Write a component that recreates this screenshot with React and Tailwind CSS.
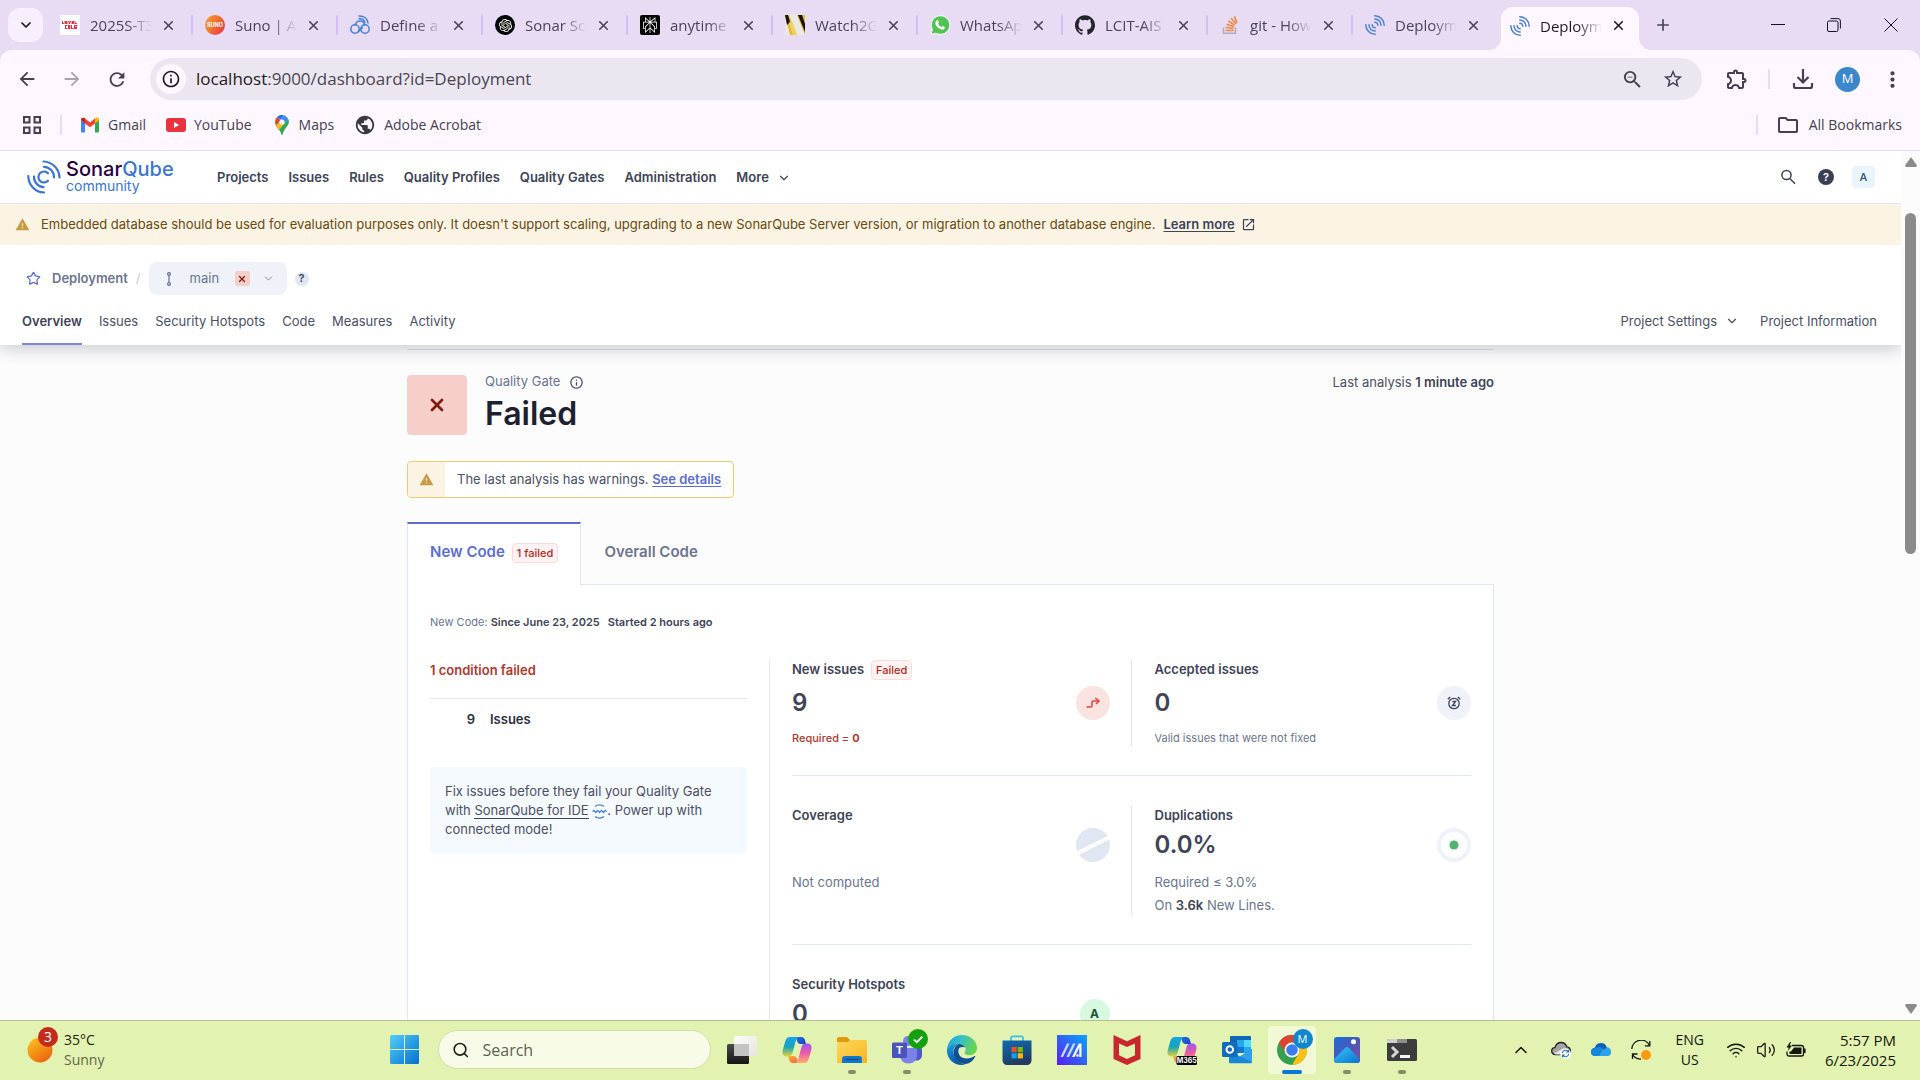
import React from "react";
import {
  MdArrowBack, MdArrowForward, MdRefresh, MdInfoOutline, MdStarBorder, MdOutlineExtension,
  MdMoreVert, MdPublic, MdOutlineFolder, MdWarning, MdOutlineZoomOut, MdOpenInNew,
} from "react-icons/md";
import { SiOpenai, SiPerplexity, SiGithub } from "react-icons/si";
import { ChevronDown, ChevronUp, X, Plus, Search, Wifi, Volume2, Star } from "lucide-react";

const SEGOE = "font-['Open_Sans','Noto_Sans',sans-serif]";
const INTER = "font-['Inter',sans-serif]";

/* ---------- favicons ---------- */

function SonarFavicon() {
  return (
    <svg viewBox="0 0 20 20" className="size-5" fill="none" stroke="#4a7ed6" strokeWidth="1.5" strokeLinecap="round">
      <path d="M9.8 .8A9.4 9.4 0 0 1 19.2 10.2M9.8 4A6.2 6.2 0 0 1 16 10.2M9.8 7.2A3 3 0 0 1 12.8 10.2" />
      <path d="M.8 9.8A9.4 9.4 0 0 0 10.2 19.2M4 9.8A6.2 6.2 0 0 0 10.2 16M7.2 9.8A3 3 0 0 0 10.2 12.8" />
    </svg>
  );
}

function LoyalistFavicon() {
  return (
    <span className="flex size-5 flex-col justify-center gap-px bg-white px-0.5">
      <svg viewBox="0 0 16 10" className="w-4" fill="#e0364c">
        <path d="M0 1h1v2h1v1H0zM2.500 1h3v3h-3zM6 1h1l.5 1L8 1h1L8 4H7zM9.500 1h2.500v3H9.500zM12.500 1h1v2h1.500v1h-2.500z" />
        <path d="M3 5h2.500v1H4v2h1.500v1H3zM6 5h2.500v4H6zM9 5h1v3h1.500v1H9zM12 5h3.500v1H13v.5h2V9h-3z" />
      </svg>
    </span>
  );
}

function SunoFavicon() {
  return (
    <svg viewBox="0 0 20 20" className="size-5">
      <defs>
        <linearGradient id="suno" x1="0" y1="0" x2="1" y2="0.6">
          <stop offset="0" stopColor="#f6a53c" />
          <stop offset="0.55" stopColor="#f0722c" />
          <stop offset="1" stopColor="#ea3f4b" />
        </linearGradient>
      </defs>
      <circle cx="10" cy="10" r="10" fill="url(#suno)" />
      <text x="10" y="12" textAnchor="middle" fontSize="5.5" fontWeight="700" fill="#fff" fontFamily="Inter">SUNO</text>
    </svg>
  );
}

function CloudFavicon() {
  return (
    <svg viewBox="0 0 20 20" className="size-5" fill="none" stroke="#4a80d8" strokeWidth="1.5" strokeLinecap="round">
      <circle cx="5" cy="14" r="4.2" />
      <circle cx="15" cy="14" r="4.2" />
      <path d="M5.5 9.8A4.6 4.6 0 0 1 14.6 9.8M8 17L12.5 12.5" />
      <path d="M9 .9C14 .8 17.5 3.6 18 8M9 3.8C12 3.8 14.3 5 15 7.6" />
    </svg>
  );
}

function OpenAIFavicon() {
  return (
    <span className="flex size-5 items-center justify-center rounded-full bg-black text-white">
      <SiOpenai size={13} />
    </span>
  );
}

function PerplexityFavicon() {
  return (
    <span className="flex size-5 items-center justify-center rounded-xs bg-black text-white">
      <SiPerplexity size={16} />
    </span>
  );
}

function WatchFavicon() {
  return (
    <svg viewBox="0 0 20 20" className="size-5">
      <rect width="20" height="20" fill="#ebe9e4" />
      <path d="M0 0h4l8 20H5z" fill="#e9b731" />
      <path d="M0 0h3l2 7-3 3z" fill="#141414" />
      <path d="M4 8l3-2 5 14H8z" fill="#f3cf5c" />
      <path d="M12 0h8v20z" fill="#e9b731" />
      <path d="M13 0h4l3 9v8z" fill="#141414" />
    </svg>
  );
}

function WhatsAppFavicon() {
  return (
    <svg viewBox="0 0 20 20" className="size-5">
      <path d="M1 19.500l1.300-5A9.300 9.300 0 1 1 6 18.200z" fill="#4fc455" stroke="#fff" />
      <path d="M6.800 5.200c.4-.4 1.100-.3 1.300.1l.8 1.900c.1.500-.8 1.200-.8 1.500.7 1.500 1.800 2.500 3.300 3.200.4 0 1-1.100 1.400-1l2 1c.3.300.1 1.300-.3 1.800-.8.900-2.200 1.100-3.600.6-2.500-.9-4.300-2.600-5.300-4.900-.5-1.700 0-3.300 1.200-4.200z" fill="#fff" />
    </svg>
  );
}

function StackFavicon() {
  return (
    <svg viewBox="0 0 20 20" className="size-5" fill="none" strokeWidth="1.6">
      <path d="M3.5 12.5V18.2H15.5V12.5" stroke="#b3aeb8" />
      <path d="M5.5 15.5h8M5.7 12.5l7.8 1M6.6 9.2l7.2 2.6M8.4 6l6.3 4.4M11 3.2l5 5.8M14.4 1.4l2.6 6.6" stroke="#ee8646" />
    </svg>
  );
}

const tabs = [
  { title: "2025S-T3", Icon: LoyalistFavicon },
  { title: "Suno | AI", Icon: SunoFavicon },
  { title: "Define a", Icon: CloudFavicon },
  { title: "Sonar Sc", Icon: OpenAIFavicon },
  { title: "anytime", Icon: PerplexityFavicon },
  { title: "Watch2G", Icon: WatchFavicon },
  { title: "WhatsApp", Icon: WhatsAppFavicon },
  { title: "LCIT-AIS", Icon: () => <SiGithub size={20} color="#24242c" /> },
  { title: "git - How", Icon: StackFavicon },
  { title: "Deploym", Icon: SonarFavicon, last: true },
];

function TabBody({ title, Icon }) {
  return (
    <>
      <span className="shrink-0"><Icon /></span>
      <span className="ml-2.5 w-[62px] overflow-hidden text-[15px] leading-6 whitespace-nowrap [mask-image:linear-gradient(to_right,black_60%,transparent)]">{title}</span>
      <button aria-label={`Close ${title}`} className="ml-1.5 flex size-5 items-center justify-center"><X size={15} strokeWidth={2.6} /></button>
    </>
  );
}

function TabStrip() {
  return (
    <div className="flex h-[50px] items-center bg-[#e8dcf4] pl-2 text-[#4a4358]">
      <button aria-label="Search tabs" className="flex h-[34px] w-[35px] items-center justify-center rounded-xl bg-[#f7effd] text-[#1c1a22]">
        <ChevronDown size={16} strokeWidth={2.6} />
      </button>
      <div className="ml-[5px] flex">
        {tabs.map((t, i) => (
          <div key={i} className="flex h-5 w-[145px] items-center pl-3">
            <TabBody {...t} />
            {!t.last && <span className="ml-auto h-5 w-0.5 rounded bg-[#d3bdf8]" />}
          </div>
        ))}
      </div>
      <div className="relative ml-[3px] flex h-[43px] w-[138px] items-center self-end rounded-t-xl bg-[#fef7ff] pb-1.5 pl-[9px] text-[#1f1b26]">
        <span className="absolute bottom-0 -left-3 h-3 w-3 bg-[radial-gradient(circle_at_0_0,#e8dcf4_12px,#fef7ff_12px)]" />
        <span className="absolute -right-3 bottom-0 h-3 w-3 bg-[radial-gradient(circle_at_100%_0,#e8dcf4_12px,#fef7ff_12px)]" />
        <TabBody title="Deploym" Icon={SonarFavicon} />
      </div>
      <button aria-label="New tab" className="ml-3.5 flex size-5 items-center justify-center"><Plus size={18} strokeWidth={2.2} /></button>
      <div className="ml-auto flex text-[#15131a]">
        <button aria-label="Minimize" className="flex h-10 w-14 items-center justify-center">
          <svg viewBox="0 0 14 14" className="size-3.5" stroke="currentColor"><path d="M0 6.5h14" /></svg>
        </button>
        <button aria-label="Restore" className="flex h-10 w-14 items-center justify-center">
          <svg viewBox="0 0 14 14" className="size-3.5" stroke="currentColor" fill="none">
            <rect x=".5" y="3" width="10.5" height="10.5" rx="1.5" /><path d="M3.5.6H11a2.4 2.4 0 0 1 2.4 2.4v7.5" />
          </svg>
        </button>
        <button aria-label="Close" className="flex h-10 w-[58px] items-center justify-center">
          <svg viewBox="0 0 14 14" className="size-3.5" stroke="currentColor"><path d="M.5.5l13 13M13.5.5l-13 13" /></svg>
        </button>
      </div>
    </div>
  );
}

function Toolbar() {
  return (
    <div className="bg-[#e8dcf4]">
      <div className="flex h-[58px] items-center rounded-t-xl bg-[#fef7ff] text-[#463f52]">
        <button aria-label="Back" className="ml-4 flex size-[22px] items-center justify-center"><MdArrowBack size={22} /></button>
        <button aria-label="Forward" className="ml-[23px] flex size-[22px] items-center justify-center text-[#a9a2b0]"><MdArrowForward size={22} /></button>
        <button aria-label="Reload" className="ml-[23px] flex size-[22px] items-center justify-center"><MdRefresh size={23} /></button>
        <div className="ml-[22px] flex h-[42px] flex-1 items-center rounded-full bg-[#ece6f0] px-1.5">
          <button aria-label="Site information" className="flex size-[30px] items-center justify-center rounded-full bg-[#fef7ff] text-[#1c1a22]"><MdInfoOutline size={20} /></button>
          <div className="ml-2.5 flex-1 text-[17px] leading-6 text-[#4a4552]"><span className="text-[#1c1a22]">localhost</span>:9000/dashboard?id=Deployment</div>
          <button aria-label="Zoom" className="mr-[18px] text-[#463f52]"><MdOutlineZoomOut size={23} /></button>
          <button aria-label="Bookmark this tab" className="mr-3 text-[#463f52]"><MdStarBorder size={22} /></button>
        </div>
        <button aria-label="Extensions" className="ml-[23px]"><MdOutlineExtension size={24} /></button>
        <span className="ml-[19px] h-5 w-0.5 bg-[#e6dbfa]" />
        <button aria-label="Downloads" className="ml-[22px]">
          <svg viewBox="0 0 22 22" className="size-[22px]" fill="none" stroke="currentColor" strokeWidth="2.2">
            <path d="M11 1v13M5.5 9l5.5 5.5L16.5 9M2 15v3.2c0 1 .8 1.8 1.8 1.8h14.4c1 0 1.8-.8 1.8-1.8V15" />
          </svg>
        </button>
        <button className="ml-[21px] flex size-[25px] items-center justify-center rounded-full bg-[#3a87cc] text-[13px] text-white">M</button>
        <button aria-label="Menu" className="mr-[15px] ml-5"><MdMoreVert size={25} /></button>
      </div>
    </div>
  );
}

function Gmail() {
  return (
    <svg viewBox="0 0 20 16" className="h-4 w-5">
      <path d="M1 3v11.5C1 15 1.4 15.5 2 15.5h3V6z" fill="#4285f4" />
      <path d="M19 3v11.5c0 .5-.4 1-1 1h-3V6z" fill="#34a853" />
      <path d="M1 3C1 .8 3.3.2 4.8 1.2L10 5.4l5.2-4.2C16.700.2 19 .8 19 3l-4 3.600L10 10.200 5 6.600z" fill="#ea4335" />
      <path d="M15 6.600V1.300C16.700.2 19 .8 19 3z" fill="#fbbc04" />
      <path d="M1 3C1 .8 3.300.2 5 1.300v5.300z" fill="#c5221f" />
    </svg>
  );
}

function YouTube() {
  return (
    <svg viewBox="0 0 20 14" className="h-3.5 w-5">
      <rect width="20" height="14" rx="3" fill="#ea3340" /><path d="M8 4l5.200 3L8 10z" fill="#fff" />
    </svg>
  );
}

function Maps() {
  return (
    <svg viewBox="0 0 14 20" className="h-5 w-3.5">
      <path d="M0 7a7 7 0 0 1 2-5l4 4-5 4.500A7 7 0 0 1 0 7z" fill="#ea4335" />
      <path d="M2 2a7 7 0 0 1 7-1.700L5 5z" fill="#1a73e8" />
      <path d="M9 .3A7 7 0 0 1 13.300 4L4 15C2.500 13 1.500 12 1 10.500z" fill="#4285f4" />
      <path d="M1 10.500L5.500 6l3.500 3-5 6C2.500 13 1.500 12 1 10.500z" fill="#fbbc04" />
      <path d="M13.300 4c1.200 3 .5 5-1 7-2 2.700-4 5-4.600 8.200-.2 1-1.200 1-1.400 0C6 17.500 5 16 4 15z" fill="#34a853" />
      <circle cx="7" cy="7" r="2.600" fill="#fff" />
    </svg>
  );
}

function Bookmarks() {
  const link = "flex items-center text-[14px] leading-5 text-[#463f52]";
  return (
    <nav className="flex h-[43px] items-center border-b border-[#e6dcef] bg-[#fef7ff] pb-2 pl-[23px]">
      <button aria-label="Apps" className="text-[#463f52]">
        <svg viewBox="0 0 18 18" className="size-[18px]" fill="none" stroke="currentColor" strokeWidth="2">
          <path d="M1 1h5.500v5.500H1zM11.500 1H17v5.500h-5.500zM1 11.500h5.500V17H1zM11.500 11.500H17V17h-5.500z" />
        </svg>
      </button>
      <span className="ml-[19px] h-5 w-0.5 bg-[#e6dbfa]" />
      <a href="#gmail" className={`${link} ml-[18px] gap-2`}><Gmail />Gmail</a>
      <a href="#youtube" className={`${link} ml-5 gap-2`}><YouTube />YouTube</a>
      <a href="#maps" className={`${link} ml-[23px] gap-2.5`}><Maps />Maps</a>
      <a href="#acrobat" className={`${link} ml-5 gap-2`}><MdPublic size={22} color="#3b3a44" />Adobe Acrobat</a>
      <span className="ml-auto h-5 w-0.5 bg-[#e6dbfa]" />
      <a href="#all" className={`${link} mr-[18px] ml-[18px] gap-[9px]`}><MdOutlineFolder size={24} />All Bookmarks</a>
    </nav>
  );
}

/* ---------- SonarQube ---------- */

function SonarLogo() {
  return (
    <a href="#home" aria-label="SonarQube community" className="flex h-[34px] w-[150px] shrink-0 items-center gap-[5px]">
      <svg viewBox="0 0 34 34" className="size-[34px] shrink-0" fill="none" stroke="#3b74d3" strokeWidth="2.200" strokeLinecap="round">
        <path d="M16.500 1.500A16.500 16.500 0 0 1 32.500 17.500M17 6.800A10.500 10.500 0 0 1 27 17.500" />
        <path d="M21 13.300A5.500 5.500 0 1 0 21 20.700" />
        <path d="M1.300 16A16.500 16.500 0 0 0 17 32.500M7 16.500A10.300 10.300 0 0 0 16.500 27.200" />
      </svg>
      <span className="flex flex-col">
        <span className="text-[20px] leading-[18px] font-medium text-[#290042]">Sonar<span className="text-[#3b74d3]">Qube</span></span>
        <span className="text-[14px] leading-4 font-normal text-[#3b74d3]">community</span>
      </span>
    </a>
  );
}

function HelpDot({ className }) {
  return <button aria-label="Help" className={`flex items-center justify-center rounded-full font-semibold ${className}`}>?</button>;
}

function GlobalNav() {
  return (
    <nav className="flex h-[53px] items-center border-b border-[#e1e6f3] bg-white pl-[27px] text-[13px] font-semibold text-[#3e4357]">
      <SonarLogo />
      <div className="ml-10 flex items-center gap-5 pt-0.5 whitespace-nowrap">
        {["Projects", "Issues", "Rules", "Quality Profiles", "Quality Gates", "Administration"].map((n) => (
          <a key={n} href={`#${n}`}>{n}</a>
        ))}
        <button className="flex items-center gap-2">More<ChevronDown size={14} /></button>
      </div>
      <button aria-label="Search" className="ml-auto">
        <svg viewBox="0 0 16 16" className="size-4" fill="none" stroke="currentColor" strokeWidth="1.500"><circle cx="6.500" cy="6" r="4.600" /><path d="M9.800 9.400L15 14.800" /></svg>
      </button>
      <HelpDot className="ml-[22px] size-4 bg-[#3a3f55] text-[11px] text-white" />
      <button className="mr-[26px] ml-[18px] flex h-[22px] w-[23px] items-center justify-center rounded-sm bg-[#eaf4fd] text-[11px] font-medium text-[#29506b]">A</button>
    </nav>
  );
}

function Header() {
  return (
    <header className="relative z-10 bg-white pt-[17px] shadow-[0_4px_16px_rgba(29,33,47,0.22)]">
      <div className="flex h-[33px] items-center pl-[26px] text-[13px]">
        <button aria-label="Favorite" className="text-[#5d6cd0]"><Star size={15} strokeWidth={2} /></button>
        <a href="#deployment" className="ml-[11px] font-semibold text-[#6a7590]">Deployment</a>
        <span className="mx-2 text-[#c5cbdb]">/</span>
        <button className="flex h-[33px] w-[138px] items-center rounded-lg bg-[#eff2f9] pl-[17px] text-[#6a7590]">
          <svg viewBox="0 0 6 14" className="h-3.5 w-1.5" fill="none" stroke="currentColor" strokeWidth="1.300">
            <circle cx="3" cy="2" r="1.400" /><circle cx="3" cy="12" r="1.400" /><path d="M3 3.500v7" />
          </svg>
          <span className="ml-[18px]">main</span>
          <span className="ml-auto flex size-[15px] items-center justify-center rounded-xs bg-[#f6cfca] text-[#801b14]"><X size={10} strokeWidth={3} /></span>
          <ChevronDown size={13} strokeWidth={1.500} className="mr-3 ml-3" />
        </button>
        <HelpDot className="ml-2 size-3.5 bg-[#e1e6f3] text-[11px] text-[#3e4357]" />
      </div>
      <div className="mt-[15px] flex h-[35px] pr-6 pl-[22px] text-[13px] leading-[22px] text-[#4b5066]">
        <div className="flex gap-[17px]">
          <a href="#overview" className="border-b-2 border-[#7b87d9] font-semibold text-[#3e4357]">Overview</a>
          {["Issues", "Security Hotspots", "Code", "Measures", "Activity"].map((n) => <a key={n} href={`#${n}`}>{n}</a>)}
        </div>
        <button className="mr-[21px] ml-auto flex h-[22px] items-center gap-2">Project Settings<ChevronDown size={14} /></button>
        <a href="#info">Project Information</a>
      </div>
    </header>
  );
}

function Badge({ children }) {
  return <span className="rounded border border-[#fbdcd8] bg-[#fef3f2] px-1 text-[11px] leading-[18px] font-medium text-[#b3281e]">{children}</span>;
}

function Measure({ title, badge, value, icon, children, gap = "mt-0.5" }) {
  return (
    <div>
      <h3 className="flex h-5 items-center gap-[7px] text-[13px] font-semibold">{title}{badge}</h3>
      <div className={`${gap} flex h-[34px] items-center justify-between`}>
        <span className="text-[24px] leading-8 font-semibold">{value}</span>
        {icon}
      </div>
      {children}
    </div>
  );
}

function MeasureRow({ left, right }) {
  return (
    <div className="grid grid-cols-2">
      <div className="border-r border-[#e1e6f3] pr-[21px]">{left}</div>
      <div className="pl-[23px]">{right}</div>
    </div>
  );
}

function NewCodePanel() {
  return (
    <section className="min-h-[900px] border border-[#e1e6f3] bg-white px-[22px] pt-[29px]">
      <p className="text-[11px] leading-4 text-[#6a7590]">
        New Code: <span className="font-semibold text-[#3e4357]">Since June 23, 2025</span>
        <span className="ml-2 font-semibold text-[#3e4357]">Started 2 hours ago</span>
      </p>
      <div className="mt-[30px] flex text-[#3e4357]">
        <div className="h-[800px] w-[340px] shrink-0 border-r border-[#e1e6f3] pr-[22px] text-[13px]">
          <h2 className="leading-5 font-semibold text-[#b0382e]">1 condition failed</h2>
          <a href="#issues" className="mt-[18px] flex border-t border-[#e1e6f3] pt-2.5 leading-5 font-semibold text-[#2c3043]">
            <span className="w-[45px] text-right">9</span><span className="ml-[15px]">Issues</span>
          </a>
          <p className="mt-[38px] rounded bg-[#f5faff] px-[15px] py-[15px] leading-[19px] text-[#4b5066]">
            Fix issues before they fail your Quality Gate<br />
            with <a href="#ide" className="border-b border-[#3e4357]">SonarQube for IDE</a>{" "}
            <svg viewBox="0 0 15 15" className="inline size-[15px] align-middle" fill="none" stroke="#4a80d8" strokeWidth="1.200">
              <path d="M3 2.500C5.500.4 9.500.4 12 2.500M3 12.500c2.500 2.100 6.500 2.100 9 0M.5 7.500l1.400-1.200 1.900 2.200 1.900-2.200 1.900 2.200 1.900-2.200 1.900 2.200 1.900-2.200L14.700 7.500" />
            </svg>. Power up with<br />
            connected mode!
          </p>
        </div>
        <div className="flex-1 pl-[22px]">
          <MeasureRow
            left={
              <Measure title="New issues" badge={<Badge>Failed</Badge>} value="9" gap="mt-1.5" icon={
                <span className="flex size-[34px] items-center justify-center rounded-full bg-[#fae3e0] text-[#d92d20]">
                  <svg viewBox="0 0 14 12" className="h-3 w-3.5" fill="none" stroke="#e0493c" strokeWidth="1.600">
                    <path d="M.5 10h4.200c1 0 1.300-.5 1.300-1.300V6c0-1.200.5-2 1.700-2H12" /><path d="M9.300 1L13 4 10 7" />
                  </svg>
                </span>
              }>
                <p className="mt-2.5 text-[11px] leading-4 font-medium text-[#b0382e]">Required = <b className="font-bold">0</b></p>
              </Measure>
            }
            right={
              <Measure title="Accepted issues" value="0" gap="mt-1.5" icon={
                <span className="flex size-[34px] items-center justify-center rounded-full bg-[#eff2f9]">
                  <svg viewBox="0 0 14 14" className="size-3.5" fill="none" stroke="#3e4357" strokeWidth="1.300">
                    <circle cx="7" cy="7.500" r="5.200" /><path d="M.8 3.300L3.200 1M13.200 3.300L10.800 1M5.400 5.500h3.200L5.500 9.500h3.300" />
                  </svg>
                </span>
              }>
                <p className="mt-2.5 text-[11px] leading-4 text-[#6a7590]">Valid issues that were not fixed</p>
              </Measure>
            }
          />
          <hr className="mt-[29px] mb-[30px] border-[#e1e6f3]" />
          <MeasureRow
            left={
              <Measure title="Coverage" value="" icon={
                <svg viewBox="0 0 34 34" className="size-[34px]"><circle cx="17" cy="17" r="17" fill="#e1e6f3" /><path d="M0 26L34 9" stroke="#fff" strokeWidth="4" /></svg>
              }>
                <p className="mt-2.5 text-[13px] leading-5 text-[#6a7590]">Not computed</p>
              </Measure>
            }
            right={
              <Measure title="Duplications" value="0.0%" icon={
                <svg viewBox="0 0 34 34" className="size-[34px]"><circle cx="17" cy="17" r="15" fill="none" stroke="#eff2f9" strokeWidth="4" /><circle cx="17" cy="17" r="4.500" fill="#4fb56c" /></svg>
              }>
                <p className="mt-2.5 text-[13px] leading-5 text-[#6a7590]">Required ≤ 3.0%</p>
                <p className="mt-[3px] text-[13px] leading-5 text-[#6a7590]">On <b className="font-semibold text-[#3e4357]">3.6k</b> New Lines.</p>
              </Measure>
            }
          />
          <hr className="mt-[29px] mb-[30px] border-[#e1e6f3]" />
          <div className="grid grid-cols-2">
            <div className="pr-[22px]">
              <Measure title="Security Hotspots" value="0" icon={<span className="flex size-[30px] items-center justify-center rounded-full bg-[#d8f8e0] text-[12px] font-bold text-[#215632]">A</span>} />
            </div>
          </div>
        </div>
      </div>
    </section>
  );
}

function Dashboard() {
  return (
    <main className="mx-auto w-full max-w-[1087px] pt-1 text-[13px] text-[#4b5066]">
      <div className="flex items-start border-t border-[#dbdeec] pt-[25px]">
        <span className="flex size-[60px] items-center justify-center rounded bg-[#f6cfca] text-[#801b14]"><X size={20} strokeWidth={3.200} /></span>
        <div className="ml-[18px]">
          <p className="flex h-3.5 items-center gap-[9px] text-[#6a7590]">Quality Gate <MdInfoOutline size={15} color="#4c5268" /></p>
          <h1 className="mt-[7px] text-[32px] leading-9 font-semibold text-[#1d212f]">Failed</h1>
        </div>
        <p className="ml-auto leading-[15px]">Last analysis <b className="font-semibold text-[#3e4357]">1 minute ago</b></p>
      </div>
      <div className="mt-[26px] flex h-[37px] w-fit overflow-hidden rounded border border-[#f0cd6c] bg-white">
        <span className="flex w-[37px] items-center justify-center bg-[#fbf4e4]"><MdWarning size={15} color="#ca9a41" /></span>
        <p className="px-3 leading-[35px]">The last analysis has warnings. <a href="#details" className="font-semibold text-[#5d6cd0] underline underline-offset-2">See details</a></p>
      </div>
      <div role="tablist" className="relative -mb-px mt-6 flex text-[15px] font-semibold">
        <button role="tab" aria-selected="true" className="flex h-[63px] items-center gap-[7px] border-x border-t-2 border-x-[#e1e6f3] border-t-[#5d6cd0] bg-white px-[22px] pb-1 text-[#5d6cd0]">
          New Code<Badge>1 failed</Badge>
        </button>
        <button role="tab" aria-selected="false" className="px-[23px] pb-0.5 text-[#6a7590]">Overall Code</button>
      </div>
      <NewCodePanel />
    </main>
  );
}

function Page() {
  return (
    <div className="flex min-h-0 flex-1 overflow-hidden">
      <div className={`flex-1 overflow-hidden bg-[#fcfcfd] ${INTER}`}>
        <GlobalNav />
        <div role="alert" className="relative z-20 flex h-[41px] items-center bg-[#fbf4e4] pl-[15px] text-[13px] text-[#694a10]">
          <MdWarning size={15} color="#ca9a41" />
          <span className="ml-[11px]">Embedded database should be used for evaluation purposes only. It doesn't support scaling, upgrading to a new SonarQube Server version, or migration to another database engine.</span>
          <a href="#learn" className="ml-2 flex items-center gap-1.5 font-semibold text-[#3e4357]"><span className="underline underline-offset-2">Learn more</span><MdOpenInNew size={15} /></a>
        </div>
        <Header />
        <Dashboard />
      </div>
      <div className="flex w-[19px] flex-col items-center bg-[#fcfcfc] py-1.5">
        <svg viewBox="0 0 12 10" className="h-2.5 w-3 shrink-0" fill="#8b8b8b"><path d="M6 0l6 8.500-1 1.500H1L0 8.500z" /></svg>
        <div className="mt-[46px] h-[341px] w-[11px] rounded-full bg-[#8b8b8b]" />
        <svg viewBox="0 0 12 10" className="mt-auto h-2.5 w-3 shrink-0" fill="#8b8b8b"><path d="M6 10L0 1.500 1 0h10l1 1.500z" /></svg>
      </div>
    </div>
  );
}

/* ---------- taskbar ---------- */

function Grad({ id, from, to, mid, x2 = 1, y2 = 1 }) {
  return (
    <linearGradient id={id} x1="0" y1="0" x2={x2} y2={y2}>
      <stop offset="0" stopColor={from} />
      {mid && <stop offset="0.5" stopColor={mid} />}
      <stop offset="1" stopColor={to} />
    </linearGradient>
  );
}

function Icon30({ children }) {
  return <svg viewBox="0 0 30 30" className="size-[30px]">{children}</svg>;
}

function TaskView() {
  return (
    <Icon30>
      <defs><Grad id="tv1" from="#4a4a4a" to="#161616" x2={0} /><Grad id="tv2" from="#ffffff" to="#e4e4e4" /></defs>
      <rect x="0" y="9" width="22" height="20" rx="1.500" fill="url(#tv1)" />
      <rect x="7" y="1" width="23" height="20" rx="1.500" fill="url(#tv2)" opacity=".92" />
      <rect x="7" y="9" width="15" height="12" fill="#c4c4c4" />
    </Icon30>
  );
}

function CopilotShape({ p }) {
  return (
    <>
      <defs>
        <Grad id={`${p}a`} from="#1aa2f0" mid="#16a4b8" to="#e8d13a" x2={0} />
        <Grad id={`${p}b`} from="#9b57f0" mid="#ee5aa5" to="#fbb06c" x2={0} />
        <Grad id={`${p}c`} from="#1d74e0" to="#1b3fc0" />
        <Grad id={`${p}d`} from="#f8b13c" to="#f0643c" />
      </defs>
      <path d="M14 2h5c2.500 0 3.500 1.500 4.200 4l.8 3h-4c-3 0-4-.5-5-3z" fill={`url(#${p}c)`} />
      <path d="M16 28h-5c-2.500 0-3.500-1.500-4.200-4L6 21h4c3 0 4 .5 5 3z" fill={`url(#${p}d)`} />
      <path d="M8 2h8.500c-1.700 1-2.500 3-3.200 5.500L10.500 18c-.7 2.500-2 3.500-4.500 3.500H4.500C1 21.500-.2 18.500.8 15L3.200 6.500C4 3.500 5.500 2 8 2z" fill={`url(#${p}a)`} />
      <path d="M22 28h-8.500c1.700-1 2.500-3 3.200-5.500L19.500 12c.7-2.500 2-3.500 4.500-3.500h1.500c3.500 0 4.700 3 3.700 6.500l-2.400 8.500c-.8 3-2.300 4.500-4.800 4.500z" fill={`url(#${p}b)`} />
    </>
  );
}

function Copilot() {
  return <Icon30><CopilotShape p="cp" /></Icon30>;
}

function Copilot365() {
  return (
    <Icon30>
      <CopilotShape p="cm" />
      <rect x="9.500" y="21" width="20.500" height="9" rx="1.500" fill="#000" />
      <text x="19.800" y="28" textAnchor="middle" fontSize="7" fontWeight="700" fill="#fff" fontFamily="Inter">M365</text>
    </Icon30>
  );
}

function Explorer() {
  return (
    <Icon30>
      <defs><Grad id="fx" from="#ffd95e" to="#f8b420" /></defs>
      <path d="M0 4c0-1 .6-2 1.800-2H10l3 3v6H0z" fill="#e09a0c" />
      <path d="M0 7h11l2-2h15.500c.9 0 1.500.6 1.500 1.500V28H0z" fill="url(#fx)" />
      <path d="M5 28v-4c0-1.800 1-3 3-3h14c2 0 3 1.200 3 3v4z" fill="#1277c8" />
      <path d="M8 24.500h14" stroke="#0d4e8c" strokeWidth="1.200" />
    </Icon30>
  );
}

function Teams() {
  return (
    <span className="relative">
      <Icon30>
        <circle cx="24" cy="9" r="3.500" fill="#5059c9" /><circle cx="16" cy="6" r="5" fill="#7b83eb" />
        <path d="M20 13h8.500c1 0 1.500.5 1.500 1.500V20c0 3.500-2.500 5.500-5.500 5.500S20 23.500 20 20z" fill="#5059c9" />
        <path d="M8 13h15.500c.8 0 1.500.6 1.500 1.500V20c0 5-3.500 8.500-8.500 8.500S8 25 8 20z" fill="#7b83eb" />
        <rect x="0" y="7.500" width="15" height="15.500" rx="1.500" fill="#4b53bc" />
        <text x="7.500" y="19.200" textAnchor="middle" fontSize="11" fontWeight="700" fill="#fff" fontFamily="Inter">T</text>
      </Icon30>
      <svg viewBox="0 0 20 20" className="absolute -top-1.5 left-4 size-5">
        <circle cx="10" cy="10" r="10" fill="#13a10e" /><path d="M5.800 10.300l3 2.900 5.600-5.600" stroke="#fff" strokeWidth="1.800" fill="none" />
      </svg>
    </span>
  );
}

function Edge() {
  return (
    <Icon30>
      <defs><Grad id="e1" from="#1fa0e0" mid="#35c1c8" to="#6ad34e" y2={0.300} /><Grad id="e2" from="#1b9de0" to="#0c59a4" x2={0.300} /></defs>
      <path d="M0 14C.8 6 7 0 15 0c9 0 15 6.500 15 13 0 4.500-3.500 7.200-7.500 7.200-3 0-5-1-5-2.200 0-.8 1.200-1.200 1.200-3.500 0-3-3-5.500-7-5.500C6 9 2 11 0 14z" fill="url(#e1)" />
      <path d="M0 14C2 10.500 6.500 8.500 11 9c-3 1.500-5 4.500-4.500 9 .6 6 6 11 12 11-1.200.6-2.500 1-4 1C6 30-.8 23 0 14z" fill="url(#e2)" />
      <path d="M11.500 14.500c-1 5 2.500 9 8 9 3.500 0 6-1.200 8-2.500.6-.3 1 .2.6.8C26 26 22 29 18.500 29 11 29 5 22 6.800 15.500 7.600 12.500 9 10 11.500 9c3.500 0 5.500 1.500 6.500 3.500-3-.8-5.800-.5-6.500 2z" fill="#0f4f96" />
    </Icon30>
  );
}

function Store() {
  return (
    <Icon30>
      <defs><Grad id="st" from="#0d6cb5" to="#233a62" x2={0.300} /></defs>
      <path d="M9 6V3c0-1 .7-1.700 1.700-1.700h8.600c1 0 1.700.7 1.700 1.700v3" fill="none" stroke="#35c0f0" strokeWidth="1.700" />
      <path d="M.5 5.500h29V25c0 3-2 5-5 5h-19c-3 0-5-2-5-5z" fill="url(#st)" />
      <path d="M9.500 12h5.200v5.200H9.500z" fill="#f25022" /><path d="M15.700 12h5.200v5.200h-5.200z" fill="#7fba00" />
      <path d="M9.500 18.200h5.200v5.200H9.500z" fill="#00a4ef" /><path d="M15.700 18.200h5.200v5.200h-5.200z" fill="#ffb900" />
    </Icon30>
  );
}

function MyAsus() {
  return (
    <Icon30>
      <defs><linearGradient id="ma" x1="0" y1="1" x2="1" y2="0"><stop offset="0" stopColor="#5a1cf0" /><stop offset="1" stopColor="#08a6fb" /></linearGradient></defs>
      <rect width="30" height="30" fill="url(#ma)" />
      <path d="M3.500 22L10 8.500h2.500L6 22zM9.500 22L16 8.500h2.500L12 22z" fill="#c9dcff" />
      <path d="M15 22l6.800-13.500H24.500V22h-2.200V12.500L17.500 22z" fill="#fff" /><circle cx="20.500" cy="20.500" r="1.300" fill="#fff" />
    </Icon30>
  );
}

function McAfee() {
  return (
    <Icon30>
      <path d="M1.500 0L15 6.200 28.500 0v24L15 30 1.500 24zM7 8.500v11.800l8 3.700 8-3.700V8.500L15 12z" fill="#c6282e" fillRule="evenodd" />
    </Icon30>
  );
}

function Outlook() {
  return (
    <Icon30>
      <rect x="8" y="1" width="21" height="16" rx="1" fill="#1066b5" />
      <path d="M15 5h7v7h-7z" fill="#28a8ea" /><path d="M22 5h7v7h-7z" fill="#50d9ff" /><path d="M15 12h7v6h-7z" fill="#0f78d4" /><path d="M22 12h7v6h-7z" fill="#28a8ea" />
      <path d="M7 15l11 6.500L30 14v13c0 .8-.6 1.300-1.400 1.300H8.400C7.600 28.300 7 27.800 7 27z" fill="#1887d9" /><path d="M18 21.500L30 14v13z" fill="#2ea0ec" />
      <rect x="0" y="7" width="15.500" height="15" rx="1.500" fill="#0f6cbd" />
      <circle cx="7.800" cy="14.500" r="3.300" fill="none" stroke="#fff" strokeWidth="2" />
    </Icon30>
  );
}

function Chrome() {
  return (
    <span className="relative">
      <Icon30>
        <circle cx="15" cy="15" r="15" fill="#34a04f" />
        <path d="M2 7.500A15 15 0 0 1 28 7.500H15a7.500 7.500 0 0 0-6.500 11.300z" fill="#e24234" />
        <path d="M28 7.500A15 15 0 0 1 15 30l6.500-11.200A7.500 7.500 0 0 0 15 7.500z" fill="#fbc116" />
        <circle cx="15" cy="15" r="7.500" fill="#fff" /><circle cx="15" cy="15" r="5.800" fill="#3b7ded" />
      </Icon30>
      <span className="absolute -top-1.5 left-4 flex size-5 items-center justify-center rounded-full bg-[#0e87cf] text-[11px] leading-5 text-white">M</span>
    </span>
  );
}

function Photos() {
  return (
    <Icon30>
      <defs><Grad id="ph" from="#1a6fd8" mid="#4a58b8" to="#8a4aa0" /><Grad id="ph2" from="#35c6f8" to="#0a72d0" /></defs>
      <rect x="2" y="2" width="26" height="26" rx="3" fill="url(#ph)" />
      <path d="M2 24L13 13c1.200-1.200 2.800-1.200 4 0l11 11.500c0 2-1 3.500-3 3.500H5c-2 0-3-1.500-3-4z" fill="url(#ph2)" />
      <circle cx="21.500" cy="6.800" r="2.500" fill="#fff" />
    </Icon30>
  );
}

function Terminal() {
  return (
    <Icon30>
      <rect y="4" width="30" height="22" rx="1.500" fill="#3c3c3c" /><path d="M1.500 4H10v4H0V5.500C0 4.700.7 4 1.500 4z" fill="#cfcfcf" /><path d="M10 4h10v4H10z" fill="#8e8e8e" />
      <path d="M5 12l5 5-5 5" stroke="#d6d6d6" strokeWidth="3" fill="none" /><path d="M13 21.500h10" stroke="#f4f4f4" strokeWidth="3" />
    </Icon30>
  );
}

const apps = [
  { name: "Task view", Icon: TaskView },
  { name: "Copilot", Icon: Copilot },
  { name: "File Explorer", Icon: Explorer, running: true },
  { name: "Teams", Icon: Teams, running: true },
  { name: "Edge", Icon: Edge },
  { name: "Store", Icon: Store },
  { name: "MyASUS", Icon: MyAsus },
  { name: "McAfee", Icon: McAfee },
  { name: "Microsoft 365", Icon: Copilot365 },
  { name: "Outlook", Icon: Outlook },
  { name: "Chrome", Icon: Chrome, active: true },
  { name: "Photos", Icon: Photos, running: true },
  { name: "Terminal", Icon: Terminal, running: true },
];

function Weather() {
  return (
    <button className="flex w-[390px] shrink-0 items-center pl-[27px] text-left text-[14px] leading-[20px] text-[#1d2114]">
      <span className="relative">
        <svg viewBox="0 0 26 26" className="size-[26px]"><defs><Grad id="sun" from="#fcc81c" to="#ec6410" x2={0.700} /></defs><circle cx="13" cy="13" r="12.500" fill="url(#sun)" /></svg>
        <span className="absolute -top-2.5 left-[11px] flex size-5 items-center justify-center rounded-full bg-[#c42b1c] text-[14px] text-white">3</span>
      </span>
      <span className="ml-[11px]">35°C<br /><span className="text-[#5f6750]">Sunny</span></span>
    </button>
  );
}

function Tray() {
  return (
    <div className="ml-auto flex items-center pr-6 text-[14px] leading-5 text-[#14170e]">
      <button aria-label="Show hidden icons"><ChevronUp size={20} strokeWidth={1.800} /></button>
      <svg viewBox="0 0 20 18" className="ml-5 h-[18px] w-5">
        <path d="M4.500 13.500C2 13.500.7 12 .7 10s1.500-3.300 3.300-3.400C4.800 3.500 7 1.500 10 1.500c2.800 0 5 1.600 5.800 4.300 2 .2 3.500 1.700 3.500 3.800s-1.500 3.900-4 3.900z" fill="#a4a4a4" stroke="#222" strokeWidth="1.300" />
        <path d="M3 12.500l9-5 5 2-4 4H4.500z" fill="#e4e4e4" />
        <circle cx="14.500" cy="12.500" r="5.300" fill="#fff" />
        <path d="M11.300 12a3.300 3.300 0 0 1 6-1.300M17.700 13a3.300 3.300 0 0 1-6 1.300M17.500 8.800v2.200h-2.200M11.500 16.200V14h2.200" fill="none" stroke="#1670c4" strokeWidth="1.100" />
      </svg>
      <svg viewBox="0 0 20 13" className="ml-5 h-[13px] w-5">
        <path d="M4.500 13C1.800 13 0 11.300 0 8.900 0 6.600 1.600 5 3.800 4.800 4.500 2 7 0 10 0c2.800 0 5 1.600 5.800 4.200L16 13z" fill="#0f5fb8" />
        <path d="M3.800 4.800L9 4l11 6c-.5 1.800-2 3-4 3H4.500C1.800 13 0 11.300 0 8.900 0 6.600 1.600 5 3.800 4.800z" fill="#1488dc" />
        <path d="M8 13l3-5 4.800-3.800C18.300 4.300 20 6 20 8.500S18.200 13 15.800 13z" fill="#2aa2ec" />
      </svg>
      <span className="relative ml-5">
        <svg viewBox="0 0 20 20" className="size-5" fill="none" stroke="currentColor" strokeWidth="1.300">
          <path d="M.8 9A9.300 9.300 0 0 1 18.500 5.500M18.800 1v4.800h-5M1.500 19v-5h5M1.500 14.300A9 9 0 0 0 10 19" />
        </svg>
        <span className="absolute top-2.5 left-2.5 size-2.5 rounded-full bg-[#ff9a0a]" />
      </span>
      <span className="ml-6 text-center">ENG<br />US</span>
      <Wifi size={20} strokeWidth={1.700} className="ml-[22px]" />
      <Volume2 size={20} strokeWidth={1.500} className="ml-2.5" />
      <svg viewBox="0 0 20 16" className="ml-2.5 h-4 w-5" fill="none" stroke="currentColor" strokeWidth="1.300">
        <path d="M6 3.500h9.500c1.200 0 2 .8 2 2v6.500c0 1.200-.8 2-2 2H3c-1.200 0-2-.8-2-2V9.500" />
        <path d="M8 5.500h7.500V12h-12V9.500H5z" fill="currentColor" stroke="none" /><path d="M18.500 6.500v4.500" strokeWidth="2.200" />
        <path d="M4 0L.5 5.500h2.300L2 9l4-5.500H3.700L5 0z" fill="currentColor" stroke="none" />
      </svg>
      <span className="ml-[19px] text-right text-[15px]">5:57 PM<br />6/23/2025</span>
    </div>
  );
}

function Taskbar() {
  return (
    <footer className="flex h-[60px] shrink-0 items-center border-t border-[#b4bf8c] bg-[#e2f2b0] pb-0.5">
      <Weather />
      <button aria-label="Start">
        <svg viewBox="0 0 29 29" className="size-[29px]">
          <defs><linearGradient id="win" gradientUnits="userSpaceOnUse" x1="0" y1="0" x2="29" y2="29"><stop offset="0" stopColor="#52cffb" /><stop offset="1" stopColor="#0570cf" /></linearGradient></defs>
          <path d="M0 1.500C0 .6.600 0 1.500 0H14v14H0zM15 0h12.500c.9 0 1.500.6 1.500 1.500V14H15zM0 15h14v14H1.500C.6 29 0 28.400 0 27.500zM15 15h14v12.500c0 .9-.6 1.500-1.500 1.500H15z" fill="url(#win)" />
        </svg>
      </button>
      <label className="ml-[19px] flex h-[39px] w-[273px] items-center rounded-full border border-[#d3dfa8] bg-[#f8fbe8] pl-[13px] text-[#202318]">
        <Search size={20} strokeWidth={2.200} />
        <input aria-label="Search" placeholder="Search" className="ml-[13px] w-full bg-transparent pr-4 text-[16px] leading-6 outline-none placeholder:text-[#5d6350]" />
      </label>
      <div className="ml-[3px] flex">
        {apps.map(({ name, Icon, running, active }) => (
          <button key={name} aria-label={name} className="flex h-12 w-[55px] justify-center">
            <span className={`flex w-12 flex-col items-center rounded pt-[9px] ${active ? "bg-[#f1f8d6]" : ""}`}>
              <span className="flex size-[30px]"><Icon /></span>
              {running && <span className="mt-[5px] h-1 w-2 rounded-full bg-[#848c66]" />}
              {active && <span className="mt-[5px] h-1 w-5 rounded-full bg-[#0a78d4]" />}
            </span>
          </button>
        ))}
      </div>
      <Tray />
    </footer>
  );
}

export default function App() {
  return (
    <div className={`flex h-screen flex-col overflow-hidden ${SEGOE}`}>
      <TabStrip />
      <Toolbar />
      <Bookmarks />
      <Page />
      <Taskbar />
    </div>
  );
}
